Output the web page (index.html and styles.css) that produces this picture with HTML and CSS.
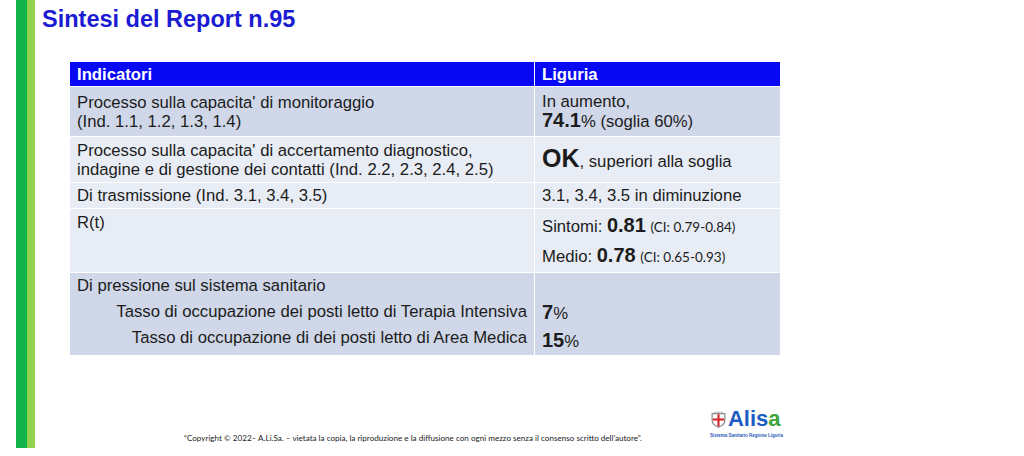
FILE: index.html
```html
<!DOCTYPE html>
<html lang="it">
<head>
<meta charset="utf-8">
<title>Sintesi del Report n.95</title>
<link rel="stylesheet" href="styles.css">
</head>
<body>
<div class="slide">
  <div class="bar"></div>
  <div class="content">
    <h1 class="title">Sintesi del Report n.95</h1>
    <table class="report">
      <tr class="head">
        <th class="c1">Indicatori</th>
        <th class="c2">Liguria</th>
      </tr>
      <tr class="r1 dark">
        <td>Processo sulla capacita' di monitoraggio<br>(Ind. 1.1, 1.2, 1.3, 1.4)</td>
        <td>In aumento,<br><b class="big">74.1</b>% (soglia 60%)</td>
      </tr>
      <tr class="r2 light">
        <td>Processo sulla capacita' di accertamento diagnostico,<br>indagine e di gestione dei contatti (Ind. 2.2, 2.3, 2.4, 2.5)</td>
        <td><b class="huge">OK</b>, superiori alla soglia</td>
      </tr>
      <tr class="r3 light">
        <td>Di trasmissione (Ind. 3.1, 3.4, 3.5)</td>
        <td>3.1, 3.4, 3.5 in diminuzione</td>
      </tr>
      <tr class="r4 light">
        <td class="top">R(t)</td>
        <td class="rt">
          <div>Sintomi: <b class="big">0.81</b> <span class="ci">(CI: 0.79-0.84)</span></div>
          <div>Medio: <b class="big">0.78</b> <span class="ci">(CI: 0.65-0.93)</span></div>
        </td>
      </tr>
      <tr class="r5 dark">
        <td class="top press">
          <div>Di pressione sul sistema sanitario</div>
          <div class="right">Tasso di occupazione dei posti letto di Terapia Intensiva</div>
          <div class="right">Tasso di occupazione di dei posti letto di Area Medica</div>
        </td>
        <td class="top press">
          <div>&nbsp;</div>
          <div><b class="big">7</b>%</div>
          <div><b class="big">15</b>%</div>
        </td>
      </tr>
    </table>
    <div class="footer">
      <p class="copy">“Copyright © 2022– A.Li.Sa. – vietata la copia, la riproduzione e la diffusione con ogni mezzo senza il consenso scritto dell’autore”.</p>
      <div class="logo">
        <div class="logo-top">
          <svg class="shield" viewBox="0 0 16 16" width="17" height="17">
            <path d="M2 2.5 H14 V8.5 C14 12 11 14.2 8 15.2 C5 14.2 2 12 2 8.5 Z" fill="#fff" stroke="#8a8a8a" stroke-width="1.1"/>
            <rect x="7" y="3" width="2" height="11.6" fill="#d42a2a"/>
            <rect x="2.6" y="7" width="10.8" height="2" fill="#d42a2a"/>
            <path d="M3.5 2.5 L5 0.8 L6.5 2.2 L8 0.6 L9.5 2.2 L11 0.8 L12.5 2.5" fill="none" stroke="#9a9a9a" stroke-width="0.8"/>
          </svg>
          <span class="alisa">Alis<span class="green">a</span></span>
        </div>
        <div class="logo-sub">Sistema Sanitario Regione Liguria</div>
      </div>
    </div>
  </div>
</div>
</body>
</html>
```

FILE: styles.css
```css
html, body {
  margin: 0;
  padding: 0;
  background: #ffffff;
}

.slide {
  display: flex;
  width: 1024px;
  height: 456px;
  overflow: hidden;
  font-family: "Liberation Sans", Arial, sans-serif;
  color: #1c1c1c;
}

.bar {
  flex: none;
  margin-left: 16px;
  width: 19px;
  height: 448px;
  background: linear-gradient(to right, #14b24b 0, #14b24b 11px, #92d050 11px, #92d050 19px);
}

.content {
  flex: 1;
  display: flex;
  flex-direction: column;
}

.title {
  margin: 5px 0 0 7px;
  font-size: 23.5px;
  line-height: 28px;
  font-weight: bold;
  color: #1b1bd4;
}

.report {
  margin: 28px 0 0 34px;
  width: 711px;
  border-collapse: collapse;
  table-layout: fixed;
  font-size: 16.7px;
  line-height: 19px;
}

.report th,
.report td {
  border: 1px solid #ffffff;
  padding: 0 7px;
  vertical-align: middle;
  text-align: left;
}

.report .c1 { width: 465px; box-sizing: border-box; }
.report .c2 { width: 246px; box-sizing: border-box; }

.head th {
  background: #0808f4;
  color: #ffffff;
  font-weight: bold;
  height: 25px;
  box-sizing: border-box;
  padding-top: 1px;
}

.dark td { background: #cfd7e8; }
.light td { background: #e8ecf4; }

.r1 td { height: 50px; box-sizing: border-box; }
.r2 td { height: 46px; box-sizing: border-box; }
.r3 td { height: 26px; box-sizing: border-box; }
.r4 td { height: 64px; box-sizing: border-box; }
.r5 td { height: 81px; box-sizing: border-box; }

.report td.top {
  vertical-align: top;
  padding-top: 4px;
}

.report td.press {
  padding-top: 0;
  line-height: 26px;
}

.press .right {
  text-align: right;
}

.rt {
  line-height: 28px;
}

.big {
  font-size: 20px;
  font-weight: bold;
}

.huge {
  font-size: 25px;
  font-weight: bold;
}

.ci {
  font-family: Lato, "Open Sans", sans-serif;
  font-size: 13.5px;
}

.footer {
  display: flex;
  align-items: flex-start;
  margin-top: 51px;
}

.copy {
  margin: 27px 0 0 149px;
  font-family: Lato, "Open Sans", sans-serif;
  font-size: 8.1px;
  line-height: 9px;
  color: #222222;
  white-space: nowrap;
}

.logo {
  margin-left: auto;
  margin-right: 241px;
  display: flex;
  flex-direction: column;
  align-items: flex-start;
}

.logo-top {
  display: flex;
  align-items: center;
  gap: 1px;
}

.shield {
  display: block;
}

.alisa {
  font-size: 22px;
  line-height: 24px;
  font-weight: bold;
  color: #1d5cc2;
}

.green {
  color: #3ea53a;
}

.logo-sub {
  margin-top: 2px;
  font-size: 4.5px;
  line-height: 6px;
  font-weight: bold;
  color: #2a5cb8;
  white-space: nowrap;
}
```
